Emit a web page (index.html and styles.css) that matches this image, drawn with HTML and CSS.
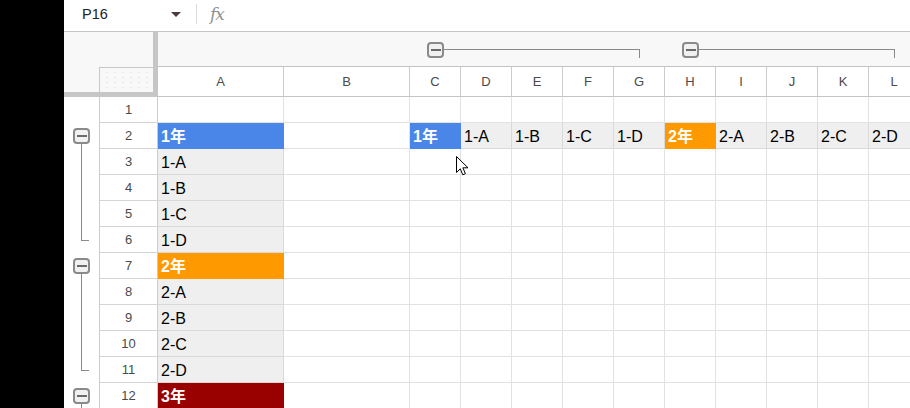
FILE: index.html
```html
<!DOCTYPE html>
<html lang="ja">
<head>
<meta charset="utf-8">
<title>Sheet</title>
<link rel="stylesheet" href="styles.css">
</head>
<body>
<div class="side"></div>
<div class="main">
  <div class="fbar">
    <div class="namebox">P16</div>
    <div class="caret"></div>
    <div class="vsep"></div>
    <div class="fx">fx</div>
  </div>
  <div class="sheet">
    <div class="corner">
      <div class="corner-cell"></div>
      <div class="vbar"></div>
      <div class="hbar"></div>
    </div>
    <div class="top-right">
      <div class="colgroups">
        <div class="cgroup g1"><div class="tog"></div><div class="cline"></div></div>
        <div class="cgroup g2"><div class="tog"></div><div class="cline"></div></div>
      </div>
      <div class="colheads">
        <div class="ch">A</div><div class="ch">B</div><div class="ch">C</div><div class="ch">D</div>
        <div class="ch">E</div><div class="ch">F</div><div class="ch">G</div><div class="ch">H</div>
        <div class="ch">I</div><div class="ch">J</div><div class="ch">K</div><div class="ch">L</div>
      </div>
    </div>
    <div class="rowside">
      <div class="gutter">
        <div class="gspace"></div>
        <div class="rgroup"><div class="tog"></div><div class="rline"></div></div>
        <div class="rgroup"><div class="tog"></div><div class="rline"></div></div>
        <div class="rgroup"><div class="tog"></div><div class="rline open"></div></div>
      </div>
      <div class="rowheads">
        <div class="rh">1</div><div class="rh">2</div><div class="rh">3</div><div class="rh">4</div>
        <div class="rh">5</div><div class="rh">6</div><div class="rh">7</div><div class="rh">8</div>
        <div class="rh">9</div><div class="rh">10</div><div class="rh">11</div><div class="rh">12</div>
      </div>
    </div>
    <div class="cells">
      <!-- row 1 -->
      <div class="c"></div><div class="c"></div><div class="c"></div><div class="c"></div><div class="c"></div><div class="c"></div>
      <div class="c"></div><div class="c"></div><div class="c"></div><div class="c"></div><div class="c"></div><div class="c"></div>
      <!-- row 2 -->
      <div class="c blue">1年</div><div class="c"></div><div class="c blue">1年</div>
      <div class="c gray">1-A</div><div class="c gray">1-B</div><div class="c gray">1-C</div><div class="c gray">1-D</div>
      <div class="c org">2年</div>
      <div class="c gray">2-A</div><div class="c gray">2-B</div><div class="c gray">2-C</div><div class="c gray">2-D</div>
      <!-- row 3 -->
      <div class="c gray">1-A</div><div class="c"></div><div class="c"></div><div class="c"></div><div class="c"></div><div class="c"></div>
      <div class="c"></div><div class="c"></div><div class="c"></div><div class="c"></div><div class="c"></div><div class="c"></div>
      <!-- row 4 -->
      <div class="c gray">1-B</div><div class="c"></div><div class="c"></div><div class="c"></div><div class="c"></div><div class="c"></div>
      <div class="c"></div><div class="c"></div><div class="c"></div><div class="c"></div><div class="c"></div><div class="c"></div>
      <!-- row 5 -->
      <div class="c gray">1-C</div><div class="c"></div><div class="c"></div><div class="c"></div><div class="c"></div><div class="c"></div>
      <div class="c"></div><div class="c"></div><div class="c"></div><div class="c"></div><div class="c"></div><div class="c"></div>
      <!-- row 6 -->
      <div class="c gray">1-D</div><div class="c"></div><div class="c"></div><div class="c"></div><div class="c"></div><div class="c"></div>
      <div class="c"></div><div class="c"></div><div class="c"></div><div class="c"></div><div class="c"></div><div class="c"></div>
      <!-- row 7 -->
      <div class="c org">2年</div><div class="c"></div><div class="c"></div><div class="c"></div><div class="c"></div><div class="c"></div>
      <div class="c"></div><div class="c"></div><div class="c"></div><div class="c"></div><div class="c"></div><div class="c"></div>
      <!-- row 8 -->
      <div class="c gray">2-A</div><div class="c"></div><div class="c"></div><div class="c"></div><div class="c"></div><div class="c"></div>
      <div class="c"></div><div class="c"></div><div class="c"></div><div class="c"></div><div class="c"></div><div class="c"></div>
      <!-- row 9 -->
      <div class="c gray">2-B</div><div class="c"></div><div class="c"></div><div class="c"></div><div class="c"></div><div class="c"></div>
      <div class="c"></div><div class="c"></div><div class="c"></div><div class="c"></div><div class="c"></div><div class="c"></div>
      <!-- row 10 -->
      <div class="c gray">2-C</div><div class="c"></div><div class="c"></div><div class="c"></div><div class="c"></div><div class="c"></div>
      <div class="c"></div><div class="c"></div><div class="c"></div><div class="c"></div><div class="c"></div><div class="c"></div>
      <!-- row 11 -->
      <div class="c gray">2-D</div><div class="c"></div><div class="c"></div><div class="c"></div><div class="c"></div><div class="c"></div>
      <div class="c"></div><div class="c"></div><div class="c"></div><div class="c"></div><div class="c"></div><div class="c"></div>
      <!-- row 12 -->
      <div class="c red">3年</div><div class="c"></div><div class="c"></div><div class="c"></div><div class="c"></div><div class="c"></div>
      <div class="c"></div><div class="c"></div><div class="c"></div><div class="c"></div><div class="c"></div><div class="c"></div>
    </div>
  </div>
</div>
<svg class="cursor" width="14" height="21" viewBox="0 0 14 21">
  <path d="M0.5 0.5 L0.5 16.5 L4.3 12.8 L6.8 18.8 L9.4 17.7 L6.9 11.8 L12 11.8 Z" fill="#fff" stroke="#000" stroke-width="1" stroke-linejoin="miter"/>
</svg>
</body>
</html>
```

FILE: styles.css
```css
* { box-sizing: border-box; margin: 0; padding: 0; }
html, body { width: 910px; height: 408px; overflow: hidden; background: #fff; }
body {
  position: relative;
  display: flex;
  font-family: "Liberation Sans", Arial, "Noto Sans CJK JP", sans-serif;
}
.side { width: 64px; flex: none; background: #000; }
.main { flex: 1; min-width: 0; display: flex; flex-direction: column; overflow: hidden; }

/* formula bar */
.fbar {
  height: 32px; flex: none;
  border-bottom: 1px solid #c4c4c4;
  display: flex; align-items: center;
  padding: 0 0 3px 18px;
}
.namebox { width: 89px; font-size: 14.5px; color: #222; }
.caret {
  width: 0; height: 0;
  border-left: 5px solid transparent; border-right: 5px solid transparent;
  border-top: 5px solid #4d3c3c;
}
.vsep { width: 1px; height: 20px; background: #dadada; margin-left: 15px; }
.fx {
  margin-left: 13px;
  font-family: "DejaVu Serif", "Liberation Serif", serif;
  font-style: italic; font-size: 17px; color: #8f8f8f;
  line-height: 20px; letter-spacing: -1px;
}

/* sheet */
.sheet {
  flex: 1; min-height: 0;
  display: grid;
  grid-template-columns: 94px minmax(0, 1fr);
  grid-template-rows: 65px minmax(0, 1fr);
  overflow: hidden;
}
.corner {
  display: grid;
  grid-template-columns: 35px 54px 5px;
  grid-template-rows: 35px 25px 5px;
  background: #f8f8f8;
}
.corner-cell {
  grid-column: 2; grid-row: 2;
  border-top: 1px solid #c8c8c8; border-left: 1px solid #c8c8c8;
  background-color: #f8f8f8;
  background-image: radial-gradient(circle, #e8e8e8 0.6px, transparent 0.8px);
  background-size: 8px 5px;
  background-position: 3px 2px;
}
.vbar { grid-column: 3; grid-row: 1 / 4; background: #c6c6c6; }
.hbar { grid-column: 1 / 3; grid-row: 3; background: #c6c6c6; }

.top-right { display: flex; flex-direction: column; min-width: 0; }
.colgroups, .colheads, .cells {
  display: grid;
  grid-template-columns: 126px 126px repeat(10, 51px);
}
.colgroups {
  height: 35px; flex: none;
  background: #f8f8f8;
  border-bottom: 1px solid #c4c4c4;
}
.cgroup {
  grid-row: 1;
  display: flex; align-items: flex-start;
  padding: 10px 25px 0 17px;
}
.g1 { grid-column: 3 / 8; }
.g2 { grid-column: 8 / 13; }
.cline {
  flex: 1; height: 9px; margin-top: 7px;
  border-top: 1px solid #8a8a8a; border-right: 1px solid #8a8a8a;
}
.tog {
  width: 17px; height: 16px; flex: none;
  border: 2px solid #8a8a8a; border-radius: 4px;
  background: #f1f1f1;
  display: flex; align-items: center; justify-content: center;
}
.tog::before { content: ""; width: 10px; height: 2px; background: #6a6a6a; }

.colheads { height: 30px; flex: none; }
.ch {
  border-right: 1px solid #cccccc; border-bottom: 1px solid #c4c4c4;
  display: flex; align-items: center; justify-content: center;
  font-size: 13px; color: #4a4a4a;
}

.rowside { display: flex; }
.gutter { width: 35px; flex: none; display: flex; flex-direction: column; }
.gspace { height: 26px; flex: none; }
.rgroup {
  height: 130px; flex: none;
  display: flex; flex-direction: column;
  padding: 5px 0 0 9px;
}
.rline {
  flex: 1; width: 8px; margin-left: 8px; margin-bottom: 12px;
  border-left: 1px solid #8a8a8a; border-bottom: 1px solid #8a8a8a;
}
.rline.open { border-bottom: none; margin-bottom: 0; }
.rowheads { width: 59px; flex: none; border-left: 1px solid #cccccc; }
.rh {
  height: 26px;
  border-right: 1px solid #cccccc; border-bottom: 1px solid #d4d4d4;
  display: flex; align-items: center; justify-content: center;
  font-size: 13px; color: #4a4a4a;
}

.cells { grid-auto-rows: 26px; }
.c {
  border-right: 1px solid #e2e2e2; border-bottom: 1px solid #e2e2e2;
  display: flex; align-items: flex-end;
  padding: 0 0 2px 3px;
  font-size: 16px; line-height: 18px; color: #000;
  white-space: nowrap; overflow: hidden;
}
.gray { background: #efefef; border-color: #d9d9d9; }
.blue { background: #4a86e8; border-color: #4a86e8; color: #fff; font-weight: bold; }
.org { background: #ff9900; border-color: #ff9900; color: #fff; font-weight: bold; }
.red { background: #990000; border-color: #990000; color: #fff; font-weight: bold; }

.cursor { position: absolute; left: 456px; top: 156px; }
```
